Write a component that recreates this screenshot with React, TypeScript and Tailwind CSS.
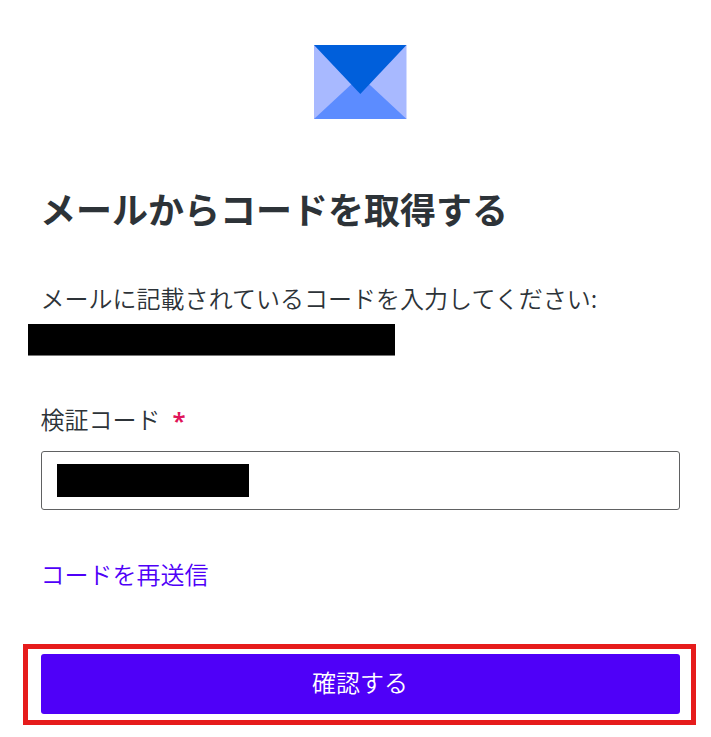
export default function App() {
  return (
    <main className="flex h-[737px] w-[711px] flex-col overflow-hidden bg-white font-['Noto_Sans_CJK_JP',sans-serif] text-[#2d3338]">
      <svg className="mt-[45px] ml-[314px] h-[74px] w-[93px] shrink-0" viewBox="0 0 93 74">
        <path fill="#a8b9ff" d="M0 0h92.5v74H0z" />
        <path fill="#5c8cff" d="M0 74 46.3 31 92.5 74z" />
        <path fill="#005fdb" d="M0 0h92.5L46.3 49z" />
      </svg>
      <h1 className="mt-[63px] ml-[40px] h-[52px] text-[36px] leading-[52px] font-bold whitespace-nowrap">メールからコードを取得する</h1>
      <p className="mt-[46px] ml-[40.5px] h-[36px] text-[24px] leading-[36px] font-[350] tracking-[0.02px] whitespace-nowrap">メールに記載されているコードを入力してください:</p>
      <div className="mt-[8px] ml-[28px] h-[32px] w-[367px] shrink-0 border-b border-[#777777] bg-black" />
      <label className="mt-[45px] ml-[40.5px] flex h-[36px] text-[24px] leading-[36px] font-[350]">検証コード<span className="mt-[2px] ml-[12px] font-['Noto_Sans'] font-semibold text-[#e0145a]">*</span></label>
      <div className="mt-[14px] ml-[41px] flex h-[59px] w-[639px] shrink-0 items-center rounded-[3px] border border-[#606162] pl-[15px]">
        <div className="h-[33px] w-[192px] bg-black" />
      </div>
      <a className="mt-[46px] ml-[40.5px] h-[36px] text-[24px] leading-[36px] font-[350] text-[#4f00f8]">コードを再送信</a>
      <div className="mt-[52px] ml-[23px] flex h-[81px] w-[673px] shrink-0 border-[5px] border-[#e61c1c] pt-[5px] pl-[13px]">
        <button className="h-[60px] w-[639px] rounded-[3px] bg-[#4f00f8] pr-[1px] pb-[5px] text-[24px] leading-[36px] font-[350] text-white">確認する</button>
      </div>
    </main>
  );
}
